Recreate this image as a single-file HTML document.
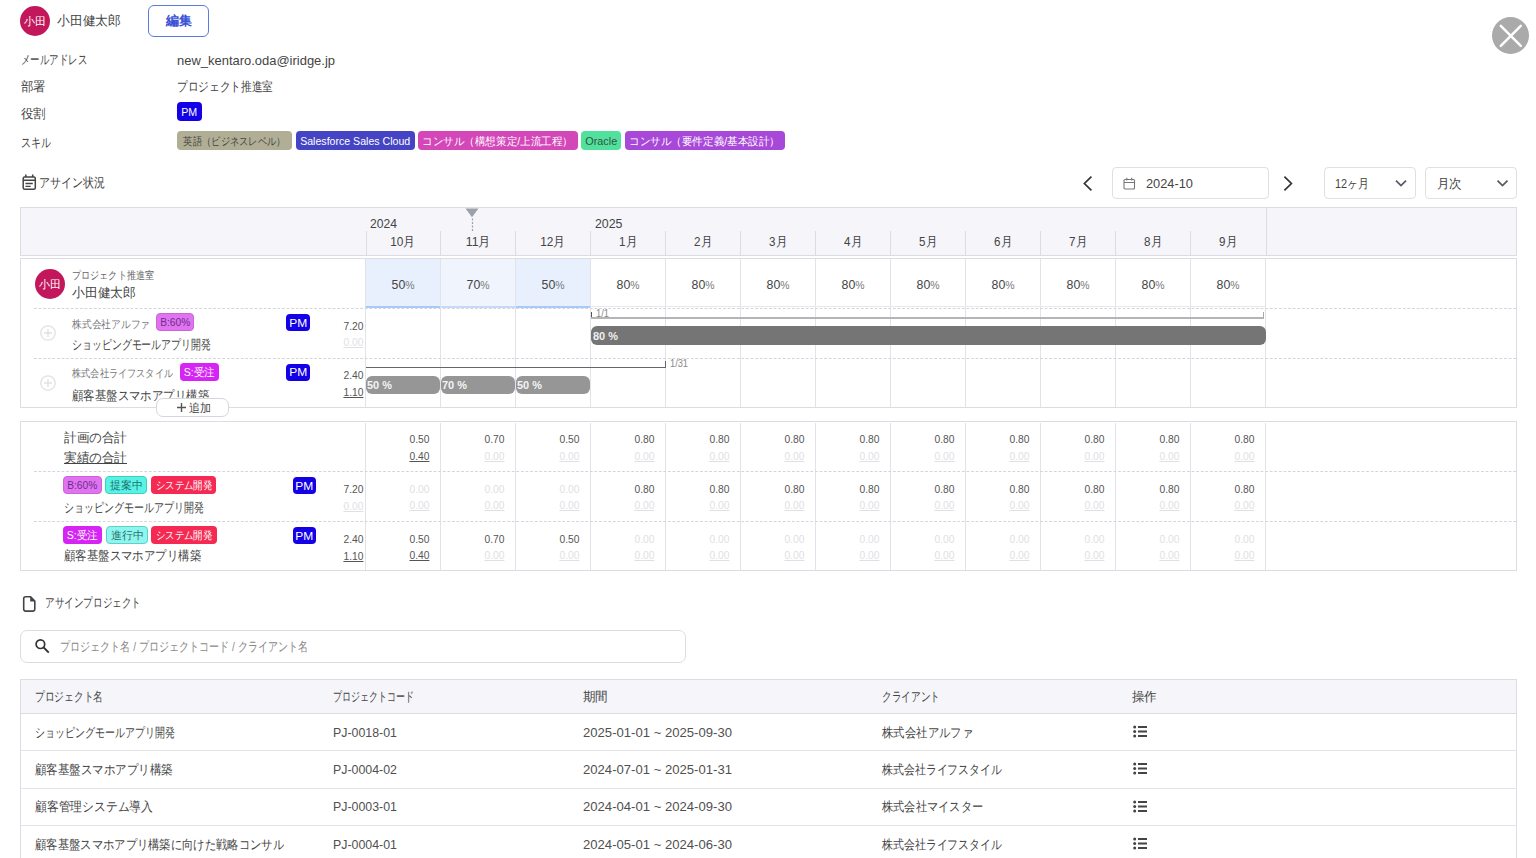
<!DOCTYPE html>
<html lang="ja"><head><meta charset="utf-8"><title>assign</title>
<style>
html,body{margin:0;padding:0;background:#fff;width:1536px;height:858px;overflow:hidden;position:relative;font-family:'Liberation Sans', sans-serif;}
.s{display:inline-block;}
</style></head><body>
<div style="position:absolute;left:20px;top:5.5px;width:30px;height:30.0px;background:#c2185b;border-radius:50%;"></div>
<div style="position:absolute;left:-465px;width:1000px;text-align:center;top:15.50px;font-size:11px;line-height:11px;color:#fff;font-weight:400;white-space:nowrap;"><span id="t1" class="s" style="transform-origin:center center;transform:scaleX(1.0000);">小田</span></div>
<div style="position:absolute;left:57px;top:14.00px;font-size:13px;line-height:13px;color:#444;font-weight:400;white-space:nowrap;"><span id="t2" class="s" style="transform-origin:left center;transform:scaleX(0.9846);">小田健太郎</span></div>
<div style="position:absolute;left:148px;top:4.8px;width:61px;height:31.8px;border:1.2px solid #5a7ce2;border-radius:6px;box-sizing:border-box;"></div>
<div style="position:absolute;left:-321.5px;width:1000px;text-align:center;top:14.00px;font-size:13px;line-height:13px;color:#3a52d6;font-weight:700;white-space:nowrap;"><span id="t3" class="s" style="transform-origin:center center;transform:scaleX(1.0000);">編集</span></div>
<div style="position:absolute;left:1492px;top:16.9px;width:37.299999999999955px;height:37.300000000000004px;background:#aaaaaa;border-radius:50%;"></div>
<svg style="position:absolute;left:1492px;top:16.9px" width="38" height="38" viewBox="0 0 38 38"><path d="M8.8 8.8 L28.8 28.8 M28.8 8.8 L8.8 28.8" stroke="#fff" stroke-width="2.5" stroke-linecap="round"/></svg>
<div style="position:absolute;left:21px;top:52.50px;font-size:13px;line-height:13px;color:#444;font-weight:400;white-space:nowrap;"><span id="t4" class="s" style="transform-origin:left center;transform:scaleX(0.7253);">メールアドレス</span></div>
<div style="position:absolute;left:177px;top:53.50px;font-size:13px;line-height:13px;color:#444;font-weight:400;white-space:nowrap;"><span id="t5" class="s" style="transform-origin:left center;transform:scaleX(0.9970);">new_kentaro.oda@iridge.jp</span></div>
<div style="position:absolute;left:21px;top:79.50px;font-size:13px;line-height:13px;color:#444;font-weight:400;white-space:nowrap;"><span id="t6" class="s" style="transform-origin:left center;transform:scaleX(0.9615);">部署</span></div>
<div style="position:absolute;left:177px;top:79.50px;font-size:13px;line-height:13px;color:#444;font-weight:400;white-space:nowrap;"><span id="t7" class="s" style="transform-origin:left center;transform:scaleX(0.8205);">プロジェクト推進室</span></div>
<div style="position:absolute;left:21px;top:106.50px;font-size:13px;line-height:13px;color:#444;font-weight:400;white-space:nowrap;"><span id="t8" class="s" style="transform-origin:left center;transform:scaleX(0.9615);">役割</span></div>
<div style="position:absolute;left:177px;top:102px;width:25px;height:19px;background:#1400e6;border-radius:4px;"></div>
<div style="position:absolute;left:-310.5px;width:1000px;text-align:center;top:106.60px;font-size:11px;line-height:11px;color:#fff;font-weight:400;white-space:nowrap;"><span id="t9" class="s" style="transform-origin:center center;transform:scaleX(0.9697);">PM</span></div>
<div style="position:absolute;left:21px;top:135.50px;font-size:13px;line-height:13px;color:#444;font-weight:400;white-space:nowrap;"><span id="t10" class="s" style="transform-origin:left center;transform:scaleX(0.7692);">スキル</span></div>
<div style="position:absolute;left:177px;top:131px;width:115px;height:19px;background:#b0ae94;border-radius:4px;"></div>
<div style="position:absolute;left:-265.5px;width:1000px;text-align:center;top:135.60px;font-size:11px;line-height:11px;color:#444;font-weight:400;white-space:nowrap;"><span id="t11" class="s" style="transform-origin:center center;transform:scaleX(0.8430);">英語（ビジネスレベル）</span></div>
<div style="position:absolute;left:296px;top:131px;width:119px;height:19px;background:#4444c4;border-radius:4px;"></div>
<div style="position:absolute;left:-144.5px;width:1000px;text-align:center;top:135.60px;font-size:11px;line-height:11px;color:#fff;font-weight:400;white-space:nowrap;"><span id="t12" class="s" style="transform-origin:center center;transform:scaleX(0.9620);">Salesforce Sales Cloud</span></div>
<div style="position:absolute;left:418px;top:131px;width:160px;height:19px;background:#d447b8;border-radius:4px;"></div>
<div style="position:absolute;left:-2.0px;width:1000px;text-align:center;top:135.60px;font-size:11px;line-height:11px;color:#fff;font-weight:400;white-space:nowrap;"><span id="t13" class="s" style="transform-origin:center center;transform:scaleX(0.9614);">コンサル（構想策定/上流工程）</span></div>
<div style="position:absolute;left:581px;top:131px;width:40px;height:19px;background:#52e19c;border-radius:4px;"></div>
<div style="position:absolute;left:101.0px;width:1000px;text-align:center;top:135.60px;font-size:11px;line-height:11px;color:#335544;font-weight:400;white-space:nowrap;"><span id="t14" class="s" style="transform-origin:center center;transform:scaleX(0.9875);">Oracle</span></div>
<div style="position:absolute;left:625px;top:131px;width:160px;height:19px;background:#a848d8;border-radius:4px;"></div>
<div style="position:absolute;left:205.0px;width:1000px;text-align:center;top:135.60px;font-size:11px;line-height:11px;color:#fff;font-weight:400;white-space:nowrap;"><span id="t15" class="s" style="transform-origin:center center;transform:scaleX(0.9614);">コンサル（要件定義/基本設計）</span></div>
<svg style="position:absolute;left:21px;top:174px" width="16" height="18" viewBox="0 0 16 18"><rect x="2.2" y="3" width="12.1" height="12.3" rx="1.5" fill="none" stroke="#444" stroke-width="1.5"/><path d="M2.2 6.3 H14.3 M4.8 0.6 V3 M11.7 0.6 V3" stroke="#444" stroke-width="1.5"/><path d="M4.5 9.5 H11.8 M4.5 12.4 H9.7" stroke="#444" stroke-width="1.3"/></svg>
<div style="position:absolute;left:39px;top:175.50px;font-size:13px;line-height:13px;color:#444;font-weight:400;white-space:nowrap;"><span id="t16" class="s" style="transform-origin:left center;transform:scaleX(0.8462);">アサイン状況</span></div>
<svg style="position:absolute;left:1080px;top:174px" width="16" height="19" viewBox="0 0 16 19"><path d="M11.4 2.7 L4.4 9.5 L11.4 16.3" fill="none" stroke="#333" stroke-width="1.7"/></svg>
<div style="position:absolute;left:1112px;top:167px;width:157px;height:32px;border:1px solid #e0e0e3;border-radius:4px;box-sizing:border-box;"></div>
<svg style="position:absolute;left:1123px;top:177px" width="13" height="13" viewBox="0 0 13 13"><rect x="1" y="2.5" width="10.5" height="9.5" rx="1" fill="none" stroke="#777" stroke-width="1.1"/><path d="M1 5.5 H11.5 M3.8 0.8 V3.5 M8.7 0.8 V3.5" stroke="#777" stroke-width="1.1"/></svg>
<div style="position:absolute;left:1146px;top:176.50px;font-size:13px;line-height:13px;color:#444;font-weight:400;white-space:nowrap;"><span id="t17" class="s" style="transform-origin:left center;transform:scaleX(0.9849);">2024-10</span></div>
<svg style="position:absolute;left:1280px;top:174px" width="16" height="19" viewBox="0 0 16 19"><path d="M4.4 2.7 L11.4 9.5 L4.4 16.3" fill="none" stroke="#333" stroke-width="1.7"/></svg>
<div style="position:absolute;left:1324px;top:167px;width:92px;height:32px;border:1px solid #e0e0e3;border-radius:4px;box-sizing:border-box;"></div>
<div style="position:absolute;left:1335px;top:176.80px;font-size:13px;line-height:13px;color:#444;font-weight:400;white-space:nowrap;"><span id="t18" class="s" style="transform-origin:left center;transform:scaleX(0.8402);">12ヶ月</span></div>
<svg style="position:absolute;left:1393px;top:178px" width="15" height="10" viewBox="0 0 15 10"><path d="M3 2.6 L8 7.6 L13 2.6" fill="none" stroke="#5a5b66" stroke-width="1.8"/></svg>
<div style="position:absolute;left:1425px;top:167px;width:92px;height:32px;border:1px solid #e0e0e3;border-radius:4px;box-sizing:border-box;"></div>
<div style="position:absolute;left:1437px;top:176.80px;font-size:13px;line-height:13px;color:#444;font-weight:400;white-space:nowrap;"><span id="t19" class="s" style="transform-origin:left center;transform:scaleX(0.9615);">月次</span></div>
<svg style="position:absolute;left:1495px;top:178px" width="15" height="10" viewBox="0 0 15 10"><path d="M2.5 2.6 L7.5 7.6 L12.5 2.6" fill="none" stroke="#5a5b66" stroke-width="1.8"/></svg>
<div style="position:absolute;left:20px;top:207px;width:1497px;height:49px;background:#f5f5fa;border:1px solid #dcdde4;box-sizing:border-box;"></div>
<div style="position:absolute;left:366px;top:231px;width:1px;height:24px;background:#dcdde4;"></div>
<div style="position:absolute;left:440px;top:231px;width:1px;height:24px;background:#dcdde4;"></div>
<div style="position:absolute;left:515px;top:231px;width:1px;height:24px;background:#dcdde4;"></div>
<div style="position:absolute;left:590px;top:231px;width:1px;height:24px;background:#dcdde4;"></div>
<div style="position:absolute;left:665px;top:231px;width:1px;height:24px;background:#dcdde4;"></div>
<div style="position:absolute;left:740px;top:231px;width:1px;height:24px;background:#dcdde4;"></div>
<div style="position:absolute;left:815px;top:231px;width:1px;height:24px;background:#dcdde4;"></div>
<div style="position:absolute;left:890px;top:231px;width:1px;height:24px;background:#dcdde4;"></div>
<div style="position:absolute;left:965px;top:231px;width:1px;height:24px;background:#dcdde4;"></div>
<div style="position:absolute;left:1040px;top:231px;width:1px;height:24px;background:#dcdde4;"></div>
<div style="position:absolute;left:1115px;top:231px;width:1px;height:24px;background:#dcdde4;"></div>
<div style="position:absolute;left:1190px;top:231px;width:1px;height:24px;background:#dcdde4;"></div>
<div style="position:absolute;left:1266px;top:207px;width:1px;height:48px;background:#dcdde4;"></div>
<div style="position:absolute;left:370px;top:216.50px;font-size:13px;line-height:13px;color:#444;font-weight:400;white-space:nowrap;"><span id="t20" class="s" style="transform-origin:left center;transform:scaleX(0.9335);">2024</span></div>
<div style="position:absolute;left:594.5px;top:216.50px;font-size:13px;line-height:13px;color:#444;font-weight:400;white-space:nowrap;"><span id="t21" class="s" style="transform-origin:left center;transform:scaleX(0.9508);">2025</span></div>
<div style="position:absolute;left:-97px;width:1000px;text-align:center;top:234.50px;font-size:13px;line-height:13px;color:#444;font-weight:400;white-space:nowrap;"><span id="t22" class="s" style="transform-origin:center center;transform:scaleX(0.9101);">10月</span></div>
<div style="position:absolute;left:-22px;width:1000px;text-align:center;top:234.50px;font-size:13px;line-height:13px;color:#444;font-weight:400;white-space:nowrap;"><span id="t23" class="s" style="transform-origin:center center;transform:scaleX(0.9434);">11月</span></div>
<div style="position:absolute;left:53px;width:1000px;text-align:center;top:234.50px;font-size:13px;line-height:13px;color:#444;font-weight:400;white-space:nowrap;"><span id="t24" class="s" style="transform-origin:center center;transform:scaleX(0.9101);">12月</span></div>
<div style="position:absolute;left:128px;width:1000px;text-align:center;top:234.50px;font-size:13px;line-height:13px;color:#444;font-weight:400;white-space:nowrap;"><span id="t25" class="s" style="transform-origin:center center;transform:scaleX(0.8896);">1月</span></div>
<div style="position:absolute;left:203px;width:1000px;text-align:center;top:234.50px;font-size:13px;line-height:13px;color:#444;font-weight:400;white-space:nowrap;"><span id="t26" class="s" style="transform-origin:center center;transform:scaleX(0.8896);">2月</span></div>
<div style="position:absolute;left:278px;width:1000px;text-align:center;top:234.50px;font-size:13px;line-height:13px;color:#444;font-weight:400;white-space:nowrap;"><span id="t27" class="s" style="transform-origin:center center;transform:scaleX(0.8896);">3月</span></div>
<div style="position:absolute;left:353px;width:1000px;text-align:center;top:234.50px;font-size:13px;line-height:13px;color:#444;font-weight:400;white-space:nowrap;"><span id="t28" class="s" style="transform-origin:center center;transform:scaleX(0.8896);">4月</span></div>
<div style="position:absolute;left:428px;width:1000px;text-align:center;top:234.50px;font-size:13px;line-height:13px;color:#444;font-weight:400;white-space:nowrap;"><span id="t29" class="s" style="transform-origin:center center;transform:scaleX(0.8896);">5月</span></div>
<div style="position:absolute;left:503px;width:1000px;text-align:center;top:234.50px;font-size:13px;line-height:13px;color:#444;font-weight:400;white-space:nowrap;"><span id="t30" class="s" style="transform-origin:center center;transform:scaleX(0.8896);">6月</span></div>
<div style="position:absolute;left:578px;width:1000px;text-align:center;top:234.50px;font-size:13px;line-height:13px;color:#444;font-weight:400;white-space:nowrap;"><span id="t31" class="s" style="transform-origin:center center;transform:scaleX(0.8896);">7月</span></div>
<div style="position:absolute;left:653px;width:1000px;text-align:center;top:234.50px;font-size:13px;line-height:13px;color:#444;font-weight:400;white-space:nowrap;"><span id="t32" class="s" style="transform-origin:center center;transform:scaleX(0.8896);">8月</span></div>
<div style="position:absolute;left:728px;width:1000px;text-align:center;top:234.50px;font-size:13px;line-height:13px;color:#444;font-weight:400;white-space:nowrap;"><span id="t33" class="s" style="transform-origin:center center;transform:scaleX(0.8896);">9月</span></div>
<svg style="position:absolute;left:465px;top:207.5px" width="15" height="24" viewBox="0 0 15 24"><path d="M0.5 0.5 H13.5 L7 9.2 Z" fill="#9ba1ab"/><path d="M7.5 10.5 V23" stroke="#9ba1ab" stroke-width="1.2" stroke-dasharray="2 1.5"/></svg>
<div style="position:absolute;left:20px;top:258px;width:1497px;height:150px;border:1px solid #dcdde4;box-sizing:border-box;"></div>
<div style="position:absolute;left:366px;top:259px;width:74px;height:49px;background:#e7f0fc;border-bottom:2px solid #a9c9f7;box-sizing:border-box;"></div>
<div style="position:absolute;left:441px;top:259px;width:74px;height:49px;background:#f0f5fd;border-bottom:2px solid #c5daf8;box-sizing:border-box;"></div>
<div style="position:absolute;left:516px;top:259px;width:74px;height:49px;background:#e7f0fc;border-bottom:2px solid #a9c9f7;box-sizing:border-box;"></div>
<div style="position:absolute;left:365px;top:259px;width:1px;height:148px;background:#e2e3e9;"></div>
<div style="position:absolute;left:440px;top:259px;width:1px;height:148px;background:#e2e3e9;"></div>
<div style="position:absolute;left:515px;top:259px;width:1px;height:148px;background:#e2e3e9;"></div>
<div style="position:absolute;left:590px;top:259px;width:1px;height:148px;background:#e2e3e9;"></div>
<div style="position:absolute;left:665px;top:259px;width:1px;height:148px;background:#e2e3e9;"></div>
<div style="position:absolute;left:740px;top:259px;width:1px;height:148px;background:#e2e3e9;"></div>
<div style="position:absolute;left:815px;top:259px;width:1px;height:148px;background:#e2e3e9;"></div>
<div style="position:absolute;left:890px;top:259px;width:1px;height:148px;background:#e2e3e9;"></div>
<div style="position:absolute;left:965px;top:259px;width:1px;height:148px;background:#e2e3e9;"></div>
<div style="position:absolute;left:1040px;top:259px;width:1px;height:148px;background:#e2e3e9;"></div>
<div style="position:absolute;left:1115px;top:259px;width:1px;height:148px;background:#e2e3e9;"></div>
<div style="position:absolute;left:1190px;top:259px;width:1px;height:148px;background:#e2e3e9;"></div>
<div style="position:absolute;left:1265px;top:259px;width:1px;height:148px;background:#e2e3e9;"></div>
<div style="position:absolute;left:34px;top:308px;width:1482px;height:1px;background-image:linear-gradient(to right,#d3d5dc 0 3px,transparent 3px 4.6px);background-size:4.6px 1px;"></div>
<div style="position:absolute;left:34px;top:358px;width:1482px;height:1px;background-image:linear-gradient(to right,#d3d5dc 0 3px,transparent 3px 4.6px);background-size:4.6px 1px;"></div>
<div style="position:absolute;left:35px;top:268.5px;width:30px;height:30.0px;background:#c2185b;border-radius:50%;"></div>
<div style="position:absolute;left:-450px;width:1000px;text-align:center;top:278.50px;font-size:11px;line-height:11px;color:#fff;font-weight:400;white-space:nowrap;"><span id="t34" class="s" style="transform-origin:center center;transform:scaleX(1.0000);">小田</span></div>
<div style="position:absolute;left:71.5px;top:269.75px;font-size:10.5px;line-height:10.5px;color:#666;font-weight:400;white-space:nowrap;"><span id="t35" class="s" style="transform-origin:left center;transform:scaleX(0.8283);">プロジェクト推進室</span></div>
<div style="position:absolute;left:71.5px;top:286.00px;font-size:13px;line-height:13px;color:#444;font-weight:400;white-space:nowrap;"><span id="t36" class="s" style="transform-origin:left center;transform:scaleX(0.9846);">小田健太郎</span></div>
<div style="position:absolute;left:-96.5px;width:1000px;text-align:center;top:277.50px;font-size:13px;line-height:13px;color:#444;font-weight:400;white-space:nowrap;"><span id="t37" class="s" style="transform-origin:center center;transform:scaleX(0.9485);">50<span style="font-size:11px;color:#777">%</span></span></div>
<div style="position:absolute;left:-21.5px;width:1000px;text-align:center;top:277.50px;font-size:13px;line-height:13px;color:#444;font-weight:400;white-space:nowrap;"><span id="t38" class="s" style="transform-origin:center center;transform:scaleX(0.9485);">70<span style="font-size:11px;color:#777">%</span></span></div>
<div style="position:absolute;left:53.5px;width:1000px;text-align:center;top:277.50px;font-size:13px;line-height:13px;color:#444;font-weight:400;white-space:nowrap;"><span id="t39" class="s" style="transform-origin:center center;transform:scaleX(0.9485);">50<span style="font-size:11px;color:#777">%</span></span></div>
<div style="position:absolute;left:128.5px;width:1000px;text-align:center;top:277.50px;font-size:13px;line-height:13px;color:#444;font-weight:400;white-space:nowrap;"><span id="t40" class="s" style="transform-origin:center center;transform:scaleX(0.9485);">80<span style="font-size:11px;color:#777">%</span></span></div>
<div style="position:absolute;left:203.5px;width:1000px;text-align:center;top:277.50px;font-size:13px;line-height:13px;color:#444;font-weight:400;white-space:nowrap;"><span id="t41" class="s" style="transform-origin:center center;transform:scaleX(0.9485);">80<span style="font-size:11px;color:#777">%</span></span></div>
<div style="position:absolute;left:278.5px;width:1000px;text-align:center;top:277.50px;font-size:13px;line-height:13px;color:#444;font-weight:400;white-space:nowrap;"><span id="t42" class="s" style="transform-origin:center center;transform:scaleX(0.9485);">80<span style="font-size:11px;color:#777">%</span></span></div>
<div style="position:absolute;left:353.5px;width:1000px;text-align:center;top:277.50px;font-size:13px;line-height:13px;color:#444;font-weight:400;white-space:nowrap;"><span id="t43" class="s" style="transform-origin:center center;transform:scaleX(0.9485);">80<span style="font-size:11px;color:#777">%</span></span></div>
<div style="position:absolute;left:428.5px;width:1000px;text-align:center;top:277.50px;font-size:13px;line-height:13px;color:#444;font-weight:400;white-space:nowrap;"><span id="t44" class="s" style="transform-origin:center center;transform:scaleX(0.9485);">80<span style="font-size:11px;color:#777">%</span></span></div>
<div style="position:absolute;left:503.5px;width:1000px;text-align:center;top:277.50px;font-size:13px;line-height:13px;color:#444;font-weight:400;white-space:nowrap;"><span id="t45" class="s" style="transform-origin:center center;transform:scaleX(0.9485);">80<span style="font-size:11px;color:#777">%</span></span></div>
<div style="position:absolute;left:578.5px;width:1000px;text-align:center;top:277.50px;font-size:13px;line-height:13px;color:#444;font-weight:400;white-space:nowrap;"><span id="t46" class="s" style="transform-origin:center center;transform:scaleX(0.9485);">80<span style="font-size:11px;color:#777">%</span></span></div>
<div style="position:absolute;left:653.5px;width:1000px;text-align:center;top:277.50px;font-size:13px;line-height:13px;color:#444;font-weight:400;white-space:nowrap;"><span id="t47" class="s" style="transform-origin:center center;transform:scaleX(0.9485);">80<span style="font-size:11px;color:#777">%</span></span></div>
<div style="position:absolute;left:728.5px;width:1000px;text-align:center;top:277.50px;font-size:13px;line-height:13px;color:#444;font-weight:400;white-space:nowrap;"><span id="t48" class="s" style="transform-origin:center center;transform:scaleX(0.9485);">80<span style="font-size:11px;color:#777">%</span></span></div>
<svg style="position:absolute;left:40px;top:325.4px" width="16" height="16" viewBox="0 0 16 16"><circle cx="8" cy="8" r="7.2" fill="none" stroke="#dfe0e6" stroke-width="1.3"/><path d="M8 4 V12 M4 8 H12" stroke="#dfe0e6" stroke-width="1.3"/></svg>
<svg style="position:absolute;left:40px;top:375px" width="16" height="16" viewBox="0 0 16 16"><circle cx="8" cy="8" r="7.2" fill="none" stroke="#dfe0e6" stroke-width="1.3"/><path d="M8 4 V12 M4 8 H12" stroke="#dfe0e6" stroke-width="1.3"/></svg>
<div style="position:absolute;left:71.7px;top:318.80px;font-size:11px;line-height:11px;color:#777;font-weight:400;white-space:nowrap;"><span id="t49" class="s" style="transform-origin:left center;transform:scaleX(0.8864);">株式会社アルファ</span></div>
<div style="position:absolute;left:156px;top:313px;width:38px;height:18px;background:#e173f0;border-radius:4px;border:1px solid #c964d9;box-sizing:border-box;"></div>
<div style="position:absolute;left:-325.0px;width:1000px;text-align:center;top:317.10px;font-size:11px;line-height:11px;color:#6b2d8c;font-weight:400;white-space:nowrap;"><span id="t50" class="s" style="transform-origin:center center;transform:scaleX(0.9253);">B:60%</span></div>
<div style="position:absolute;left:286px;top:314px;width:24px;height:17px;background:#1400e6;border-radius:4px;"></div>
<div style="position:absolute;left:-202.0px;width:1000px;text-align:center;top:317.60px;font-size:11px;line-height:11px;color:#fff;font-weight:400;white-space:nowrap;"><span id="t51" class="s" style="transform-origin:center center;transform:scaleX(1.0909);">PM</span></div>
<div style="position:absolute;left:72px;top:337.80px;font-size:13px;line-height:13px;color:#444;font-weight:400;white-space:nowrap;"><span id="t52" class="s" style="transform-origin:left center;transform:scaleX(0.7637);">ショッピングモールアプリ開発</span></div>
<div style="position:absolute;right:1172.5px;top:320.50px;font-size:11px;line-height:11px;color:#555;font-weight:400;white-space:nowrap;"><span id="t53" class="s" style="transform-origin:right center;transform:scaleX(0.9336);">7.20</span></div>
<div style="position:absolute;right:1172.5px;top:337.20px;font-size:11px;line-height:11px;color:#dfe0e4;font-weight:400;white-space:nowrap;"><span id="t54" class="s" style="transform-origin:right center;transform:scaleX(0.9336);text-decoration:underline;">0.00</span></div>
<div style="position:absolute;left:591px;top:306px;width:674px;height:1px;background:#e6e8ed;"></div>
<div style="position:absolute;left:591px;top:312px;width:1px;height:6.5px;background:#555;"></div>
<div style="position:absolute;left:591px;top:317px;width:673px;height:1.8000000000000114px;background:#b5b5b5;"></div>
<div style="position:absolute;left:1262.5px;top:312px;width:1.5px;height:6.800000000000011px;background:#aaa;border-bottom-right-radius:1px;"></div>
<div style="position:absolute;left:595.7px;top:309.00px;font-size:10px;line-height:10px;color:#888;font-weight:400;white-space:nowrap;"><span id="t55" class="s" style="transform-origin:left center;transform:scaleX(0.9348);">1/1</span></div>
<div style="position:absolute;left:591px;top:326.2px;width:674.5px;height:18.400000000000034px;background:#757575;border-radius:6px;"></div>
<div style="position:absolute;left:593px;top:330.70px;font-size:11px;line-height:11px;color:#f0f0f0;font-weight:700;white-space:nowrap;"><span id="t56" class="s" style="transform-origin:left center;transform:scaleX(0.9969);">80 %</span></div>
<div style="position:absolute;left:71.7px;top:367.90px;font-size:11px;line-height:11px;color:#777;font-weight:400;white-space:nowrap;"><span id="t57" class="s" style="transform-origin:left center;transform:scaleX(0.8347);">株式会社ライフスタイル</span></div>
<div style="position:absolute;left:180px;top:363px;width:39px;height:18px;background:#d524f3;border-radius:4px;"></div>
<div style="position:absolute;left:-300.5px;width:1000px;text-align:center;top:367.10px;font-size:11px;line-height:11px;color:#fff;font-weight:400;white-space:nowrap;"><span id="t58" class="s" style="transform-origin:center center;transform:scaleX(0.9566);">S:受注</span></div>
<div style="position:absolute;left:286px;top:364px;width:24px;height:16.5px;background:#1400e6;border-radius:4px;"></div>
<div style="position:absolute;left:-202.0px;width:1000px;text-align:center;top:367.35px;font-size:11px;line-height:11px;color:#fff;font-weight:400;white-space:nowrap;"><span id="t59" class="s" style="transform-origin:center center;transform:scaleX(1.0909);">PM</span></div>
<div style="position:absolute;left:72px;top:388.50px;font-size:13px;line-height:13px;color:#444;font-weight:400;white-space:nowrap;"><span id="t60" class="s" style="transform-origin:left center;transform:scaleX(0.8782);">顧客基盤スマホアプリ構築</span></div>
<div style="position:absolute;right:1172.5px;top:370.20px;font-size:11px;line-height:11px;color:#555;font-weight:400;white-space:nowrap;"><span id="t61" class="s" style="transform-origin:right center;transform:scaleX(0.9336);">2.40</span></div>
<div style="position:absolute;right:1172.5px;top:386.90px;font-size:11px;line-height:11px;color:#555;font-weight:400;white-space:nowrap;"><span id="t62" class="s" style="transform-origin:right center;transform:scaleX(0.9336);text-decoration:underline;">1.10</span></div>
<div style="position:absolute;left:366px;top:366.9px;width:300px;height:1.0px;background:#666;"></div>
<div style="position:absolute;left:665px;top:361px;width:1px;height:6.899999999999977px;background:#666;"></div>
<div style="position:absolute;left:669.7px;top:359.00px;font-size:10px;line-height:10px;color:#888;font-weight:400;white-space:nowrap;"><span id="t63" class="s" style="transform-origin:left center;transform:scaleX(0.9246);">1/31</span></div>
<div style="position:absolute;left:365.5px;top:376.3px;width:74.5px;height:17.69999999999999px;background:#969696;border-radius:6px;"></div>
<div style="position:absolute;left:367px;top:380.00px;font-size:11px;line-height:11px;color:#f4f4f4;font-weight:700;white-space:nowrap;"><span id="t64" class="s" style="transform-origin:left center;transform:scaleX(0.9969);">50 %</span></div>
<div style="position:absolute;left:440.5px;top:376.3px;width:74.5px;height:17.69999999999999px;background:#969696;border-radius:6px;"></div>
<div style="position:absolute;left:442px;top:380.00px;font-size:11px;line-height:11px;color:#f4f4f4;font-weight:700;white-space:nowrap;"><span id="t65" class="s" style="transform-origin:left center;transform:scaleX(0.9969);">70 %</span></div>
<div style="position:absolute;left:515.5px;top:376.3px;width:74.5px;height:17.69999999999999px;background:#969696;border-radius:6px;"></div>
<div style="position:absolute;left:517px;top:380.00px;font-size:11px;line-height:11px;color:#f4f4f4;font-weight:700;white-space:nowrap;"><span id="t66" class="s" style="transform-origin:left center;transform:scaleX(0.9969);">50 %</span></div>
<div style="position:absolute;left:156px;top:398px;width:72.5px;height:18.5px;background:#fff;border:1px solid #d6d7dd;border-radius:7px;box-sizing:border-box;"></div>
<svg style="position:absolute;left:177px;top:403px" width="9" height="9" viewBox="0 0 9 9"><path d="M4.5 0 V9 M0 4.5 H9" stroke="#555" stroke-width="1.4"/></svg>
<div style="position:absolute;left:189.3px;top:401.80px;font-size:12px;line-height:12px;color:#444;font-weight:400;white-space:nowrap;"><span id="t67" class="s" style="transform-origin:left center;transform:scaleX(0.9167);">追加</span></div>
<div style="position:absolute;left:20px;top:421px;width:1497px;height:149.5px;border:1px solid #dcdde4;box-sizing:border-box;"></div>
<div style="position:absolute;left:365px;top:422.5px;width:1px;height:147.0px;background:#e2e3e9;"></div>
<div style="position:absolute;left:440px;top:422.5px;width:1px;height:147.0px;background:#e2e3e9;"></div>
<div style="position:absolute;left:515px;top:422.5px;width:1px;height:147.0px;background:#e2e3e9;"></div>
<div style="position:absolute;left:590px;top:422.5px;width:1px;height:147.0px;background:#e2e3e9;"></div>
<div style="position:absolute;left:665px;top:422.5px;width:1px;height:147.0px;background:#e2e3e9;"></div>
<div style="position:absolute;left:740px;top:422.5px;width:1px;height:147.0px;background:#e2e3e9;"></div>
<div style="position:absolute;left:815px;top:422.5px;width:1px;height:147.0px;background:#e2e3e9;"></div>
<div style="position:absolute;left:890px;top:422.5px;width:1px;height:147.0px;background:#e2e3e9;"></div>
<div style="position:absolute;left:965px;top:422.5px;width:1px;height:147.0px;background:#e2e3e9;"></div>
<div style="position:absolute;left:1040px;top:422.5px;width:1px;height:147.0px;background:#e2e3e9;"></div>
<div style="position:absolute;left:1115px;top:422.5px;width:1px;height:147.0px;background:#e2e3e9;"></div>
<div style="position:absolute;left:1190px;top:422.5px;width:1px;height:147.0px;background:#e2e3e9;"></div>
<div style="position:absolute;left:1265px;top:422.5px;width:1px;height:147.0px;background:#e2e3e9;"></div>
<div style="position:absolute;left:34px;top:471px;width:1482px;height:1px;background-image:linear-gradient(to right,#d3d5dc 0 3px,transparent 3px 4.6px);background-size:4.6px 1px;"></div>
<div style="position:absolute;left:34px;top:521px;width:1482px;height:1px;background-image:linear-gradient(to right,#d3d5dc 0 3px,transparent 3px 4.6px);background-size:4.6px 1px;"></div>
<div style="position:absolute;left:63.8px;top:430.50px;font-size:13px;line-height:13px;color:#444;font-weight:400;white-space:nowrap;"><span id="t68" class="s" style="transform-origin:left center;transform:scaleX(0.9692);">計画の合計</span></div>
<div style="position:absolute;left:63.8px;top:450.50px;font-size:13px;line-height:13px;color:#444;font-weight:400;white-space:nowrap;"><span id="t69" class="s" style="transform-origin:left center;transform:scaleX(0.9692);text-decoration:underline;">実績の合計</span></div>
<div style="position:absolute;left:63px;top:476px;width:39px;height:18.30000000000001px;background:#e173f0;border-radius:4px;border:1px solid #c964d9;box-sizing:border-box;"></div>
<div style="position:absolute;left:-417.5px;width:1000px;text-align:center;top:480.25px;font-size:11px;line-height:11px;color:#6b2d8c;font-weight:400;white-space:nowrap;"><span id="t70" class="s" style="transform-origin:center center;transform:scaleX(0.9253);">B:60%</span></div>
<div style="position:absolute;left:105.3px;top:476px;width:41.7px;height:18.30000000000001px;background:#57f4e6;border-radius:4px;border:1px solid #40cfc0;box-sizing:border-box;"></div>
<div style="position:absolute;left:-373.85px;width:1000px;text-align:center;top:480.25px;font-size:11px;line-height:11px;color:#22706a;font-weight:400;white-space:nowrap;"><span id="t71" class="s" style="transform-origin:center center;transform:scaleX(1.0000);">提案中</span></div>
<div style="position:absolute;left:151.2px;top:476px;width:65.30000000000001px;height:18.30000000000001px;background:#f42a53;border-radius:4px;"></div>
<div style="position:absolute;left:-316.15px;width:1000px;text-align:center;top:480.25px;font-size:11px;line-height:11px;color:#fff;font-weight:400;white-space:nowrap;"><span id="t72" class="s" style="transform-origin:center center;transform:scaleX(0.8636);">システム開発</span></div>
<div style="position:absolute;left:293px;top:477px;width:23px;height:17px;background:#1400e6;border-radius:4px;"></div>
<div style="position:absolute;left:-195.5px;width:1000px;text-align:center;top:480.60px;font-size:11px;line-height:11px;color:#fff;font-weight:400;white-space:nowrap;"><span id="t73" class="s" style="transform-origin:center center;transform:scaleX(1.0909);">PM</span></div>
<div style="position:absolute;left:63.8px;top:500.70px;font-size:13px;line-height:13px;color:#444;font-weight:400;white-space:nowrap;"><span id="t74" class="s" style="transform-origin:left center;transform:scaleX(0.7692);">ショッピングモールアプリ開発</span></div>
<div style="position:absolute;right:1172.5px;top:483.50px;font-size:11px;line-height:11px;color:#555;font-weight:400;white-space:nowrap;"><span id="t75" class="s" style="transform-origin:right center;transform:scaleX(0.9336);">7.20</span></div>
<div style="position:absolute;right:1172.5px;top:500.50px;font-size:11px;line-height:11px;color:#dfe0e4;font-weight:400;white-space:nowrap;"><span id="t76" class="s" style="transform-origin:right center;transform:scaleX(0.9336);text-decoration:underline;">0.00</span></div>
<div style="position:absolute;left:63px;top:526px;width:39px;height:18px;background:#d524f3;border-radius:4px;"></div>
<div style="position:absolute;left:-417.5px;width:1000px;text-align:center;top:530.10px;font-size:11px;line-height:11px;color:#fff;font-weight:400;white-space:nowrap;"><span id="t77" class="s" style="transform-origin:center center;transform:scaleX(0.9566);">S:受注</span></div>
<div style="position:absolute;left:106px;top:526px;width:42px;height:18px;background:#8ef6ee;border-radius:4px;border:1px solid #5fd0c8;box-sizing:border-box;"></div>
<div style="position:absolute;left:-373.0px;width:1000px;text-align:center;top:530.10px;font-size:11px;line-height:11px;color:#2a6f6a;font-weight:400;white-space:nowrap;"><span id="t78" class="s" style="transform-origin:center center;transform:scaleX(1.0000);">進行中</span></div>
<div style="position:absolute;left:151.2px;top:526px;width:65.80000000000001px;height:18px;background:#f42a53;border-radius:4px;"></div>
<div style="position:absolute;left:-315.9px;width:1000px;text-align:center;top:530.10px;font-size:11px;line-height:11px;color:#fff;font-weight:400;white-space:nowrap;"><span id="t79" class="s" style="transform-origin:center center;transform:scaleX(0.8636);">システム開発</span></div>
<div style="position:absolute;left:293px;top:527px;width:23px;height:17px;background:#1400e6;border-radius:4px;"></div>
<div style="position:absolute;left:-195.5px;width:1000px;text-align:center;top:530.60px;font-size:11px;line-height:11px;color:#fff;font-weight:400;white-space:nowrap;"><span id="t80" class="s" style="transform-origin:center center;transform:scaleX(1.0909);">PM</span></div>
<div style="position:absolute;left:63.8px;top:549.30px;font-size:13px;line-height:13px;color:#444;font-weight:400;white-space:nowrap;"><span id="t81" class="s" style="transform-origin:left center;transform:scaleX(0.8782);">顧客基盤スマホアプリ構築</span></div>
<div style="position:absolute;right:1172.5px;top:533.50px;font-size:11px;line-height:11px;color:#555;font-weight:400;white-space:nowrap;"><span id="t82" class="s" style="transform-origin:right center;transform:scaleX(0.9336);">2.40</span></div>
<div style="position:absolute;right:1172.5px;top:550.50px;font-size:11px;line-height:11px;color:#555;font-weight:400;white-space:nowrap;"><span id="t83" class="s" style="transform-origin:right center;transform:scaleX(0.9336);text-decoration:underline;">1.10</span></div>
<div style="position:absolute;right:1106.5px;top:434.00px;font-size:11px;line-height:11px;color:#555;font-weight:400;white-space:nowrap;"><span id="t84" class="s" style="transform-origin:right center;transform:scaleX(0.9336);">0.50</span></div>
<div style="position:absolute;right:1106.5px;top:450.70px;font-size:11px;line-height:11px;color:#555;font-weight:400;white-space:nowrap;"><span id="t85" class="s" style="transform-origin:right center;transform:scaleX(0.9336);text-decoration:underline;">0.40</span></div>
<div style="position:absolute;right:1106.5px;top:483.50px;font-size:11px;line-height:11px;color:#dfe0e4;font-weight:400;white-space:nowrap;"><span id="t86" class="s" style="transform-origin:right center;transform:scaleX(0.9336);">0.00</span></div>
<div style="position:absolute;right:1106.5px;top:499.70px;font-size:11px;line-height:11px;color:#dfe0e4;font-weight:400;white-space:nowrap;"><span id="t87" class="s" style="transform-origin:right center;transform:scaleX(0.9336);text-decoration:underline;">0.00</span></div>
<div style="position:absolute;right:1106.5px;top:533.50px;font-size:11px;line-height:11px;color:#555;font-weight:400;white-space:nowrap;"><span id="t88" class="s" style="transform-origin:right center;transform:scaleX(0.9336);">0.50</span></div>
<div style="position:absolute;right:1106.5px;top:549.70px;font-size:11px;line-height:11px;color:#555;font-weight:400;white-space:nowrap;"><span id="t89" class="s" style="transform-origin:right center;transform:scaleX(0.9336);text-decoration:underline;">0.40</span></div>
<div style="position:absolute;right:1031.5px;top:434.00px;font-size:11px;line-height:11px;color:#555;font-weight:400;white-space:nowrap;"><span id="t90" class="s" style="transform-origin:right center;transform:scaleX(0.9336);">0.70</span></div>
<div style="position:absolute;right:1031.5px;top:450.70px;font-size:11px;line-height:11px;color:#dfe0e4;font-weight:400;white-space:nowrap;"><span id="t91" class="s" style="transform-origin:right center;transform:scaleX(0.9336);text-decoration:underline;">0.00</span></div>
<div style="position:absolute;right:1031.5px;top:483.50px;font-size:11px;line-height:11px;color:#dfe0e4;font-weight:400;white-space:nowrap;"><span id="t92" class="s" style="transform-origin:right center;transform:scaleX(0.9336);">0.00</span></div>
<div style="position:absolute;right:1031.5px;top:499.70px;font-size:11px;line-height:11px;color:#dfe0e4;font-weight:400;white-space:nowrap;"><span id="t93" class="s" style="transform-origin:right center;transform:scaleX(0.9336);text-decoration:underline;">0.00</span></div>
<div style="position:absolute;right:1031.5px;top:533.50px;font-size:11px;line-height:11px;color:#555;font-weight:400;white-space:nowrap;"><span id="t94" class="s" style="transform-origin:right center;transform:scaleX(0.9336);">0.70</span></div>
<div style="position:absolute;right:1031.5px;top:549.70px;font-size:11px;line-height:11px;color:#dfe0e4;font-weight:400;white-space:nowrap;"><span id="t95" class="s" style="transform-origin:right center;transform:scaleX(0.9336);text-decoration:underline;">0.00</span></div>
<div style="position:absolute;right:956.5px;top:434.00px;font-size:11px;line-height:11px;color:#555;font-weight:400;white-space:nowrap;"><span id="t96" class="s" style="transform-origin:right center;transform:scaleX(0.9336);">0.50</span></div>
<div style="position:absolute;right:956.5px;top:450.70px;font-size:11px;line-height:11px;color:#dfe0e4;font-weight:400;white-space:nowrap;"><span id="t97" class="s" style="transform-origin:right center;transform:scaleX(0.9336);text-decoration:underline;">0.00</span></div>
<div style="position:absolute;right:956.5px;top:483.50px;font-size:11px;line-height:11px;color:#dfe0e4;font-weight:400;white-space:nowrap;"><span id="t98" class="s" style="transform-origin:right center;transform:scaleX(0.9336);">0.00</span></div>
<div style="position:absolute;right:956.5px;top:499.70px;font-size:11px;line-height:11px;color:#dfe0e4;font-weight:400;white-space:nowrap;"><span id="t99" class="s" style="transform-origin:right center;transform:scaleX(0.9336);text-decoration:underline;">0.00</span></div>
<div style="position:absolute;right:956.5px;top:533.50px;font-size:11px;line-height:11px;color:#555;font-weight:400;white-space:nowrap;"><span id="t100" class="s" style="transform-origin:right center;transform:scaleX(0.9336);">0.50</span></div>
<div style="position:absolute;right:956.5px;top:549.70px;font-size:11px;line-height:11px;color:#dfe0e4;font-weight:400;white-space:nowrap;"><span id="t101" class="s" style="transform-origin:right center;transform:scaleX(0.9336);text-decoration:underline;">0.00</span></div>
<div style="position:absolute;right:881.5px;top:434.00px;font-size:11px;line-height:11px;color:#555;font-weight:400;white-space:nowrap;"><span id="t102" class="s" style="transform-origin:right center;transform:scaleX(0.9336);">0.80</span></div>
<div style="position:absolute;right:881.5px;top:450.70px;font-size:11px;line-height:11px;color:#dfe0e4;font-weight:400;white-space:nowrap;"><span id="t103" class="s" style="transform-origin:right center;transform:scaleX(0.9336);text-decoration:underline;">0.00</span></div>
<div style="position:absolute;right:881.5px;top:483.50px;font-size:11px;line-height:11px;color:#555;font-weight:400;white-space:nowrap;"><span id="t104" class="s" style="transform-origin:right center;transform:scaleX(0.9336);">0.80</span></div>
<div style="position:absolute;right:881.5px;top:499.70px;font-size:11px;line-height:11px;color:#dfe0e4;font-weight:400;white-space:nowrap;"><span id="t105" class="s" style="transform-origin:right center;transform:scaleX(0.9336);text-decoration:underline;">0.00</span></div>
<div style="position:absolute;right:881.5px;top:533.50px;font-size:11px;line-height:11px;color:#dfe0e4;font-weight:400;white-space:nowrap;"><span id="t106" class="s" style="transform-origin:right center;transform:scaleX(0.9336);">0.00</span></div>
<div style="position:absolute;right:881.5px;top:549.70px;font-size:11px;line-height:11px;color:#dfe0e4;font-weight:400;white-space:nowrap;"><span id="t107" class="s" style="transform-origin:right center;transform:scaleX(0.9336);text-decoration:underline;">0.00</span></div>
<div style="position:absolute;right:806.5px;top:434.00px;font-size:11px;line-height:11px;color:#555;font-weight:400;white-space:nowrap;"><span id="t108" class="s" style="transform-origin:right center;transform:scaleX(0.9336);">0.80</span></div>
<div style="position:absolute;right:806.5px;top:450.70px;font-size:11px;line-height:11px;color:#dfe0e4;font-weight:400;white-space:nowrap;"><span id="t109" class="s" style="transform-origin:right center;transform:scaleX(0.9336);text-decoration:underline;">0.00</span></div>
<div style="position:absolute;right:806.5px;top:483.50px;font-size:11px;line-height:11px;color:#555;font-weight:400;white-space:nowrap;"><span id="t110" class="s" style="transform-origin:right center;transform:scaleX(0.9336);">0.80</span></div>
<div style="position:absolute;right:806.5px;top:499.70px;font-size:11px;line-height:11px;color:#dfe0e4;font-weight:400;white-space:nowrap;"><span id="t111" class="s" style="transform-origin:right center;transform:scaleX(0.9336);text-decoration:underline;">0.00</span></div>
<div style="position:absolute;right:806.5px;top:533.50px;font-size:11px;line-height:11px;color:#dfe0e4;font-weight:400;white-space:nowrap;"><span id="t112" class="s" style="transform-origin:right center;transform:scaleX(0.9336);">0.00</span></div>
<div style="position:absolute;right:806.5px;top:549.70px;font-size:11px;line-height:11px;color:#dfe0e4;font-weight:400;white-space:nowrap;"><span id="t113" class="s" style="transform-origin:right center;transform:scaleX(0.9336);text-decoration:underline;">0.00</span></div>
<div style="position:absolute;right:731.5px;top:434.00px;font-size:11px;line-height:11px;color:#555;font-weight:400;white-space:nowrap;"><span id="t114" class="s" style="transform-origin:right center;transform:scaleX(0.9336);">0.80</span></div>
<div style="position:absolute;right:731.5px;top:450.70px;font-size:11px;line-height:11px;color:#dfe0e4;font-weight:400;white-space:nowrap;"><span id="t115" class="s" style="transform-origin:right center;transform:scaleX(0.9336);text-decoration:underline;">0.00</span></div>
<div style="position:absolute;right:731.5px;top:483.50px;font-size:11px;line-height:11px;color:#555;font-weight:400;white-space:nowrap;"><span id="t116" class="s" style="transform-origin:right center;transform:scaleX(0.9336);">0.80</span></div>
<div style="position:absolute;right:731.5px;top:499.70px;font-size:11px;line-height:11px;color:#dfe0e4;font-weight:400;white-space:nowrap;"><span id="t117" class="s" style="transform-origin:right center;transform:scaleX(0.9336);text-decoration:underline;">0.00</span></div>
<div style="position:absolute;right:731.5px;top:533.50px;font-size:11px;line-height:11px;color:#dfe0e4;font-weight:400;white-space:nowrap;"><span id="t118" class="s" style="transform-origin:right center;transform:scaleX(0.9336);">0.00</span></div>
<div style="position:absolute;right:731.5px;top:549.70px;font-size:11px;line-height:11px;color:#dfe0e4;font-weight:400;white-space:nowrap;"><span id="t119" class="s" style="transform-origin:right center;transform:scaleX(0.9336);text-decoration:underline;">0.00</span></div>
<div style="position:absolute;right:656.5px;top:434.00px;font-size:11px;line-height:11px;color:#555;font-weight:400;white-space:nowrap;"><span id="t120" class="s" style="transform-origin:right center;transform:scaleX(0.9336);">0.80</span></div>
<div style="position:absolute;right:656.5px;top:450.70px;font-size:11px;line-height:11px;color:#dfe0e4;font-weight:400;white-space:nowrap;"><span id="t121" class="s" style="transform-origin:right center;transform:scaleX(0.9336);text-decoration:underline;">0.00</span></div>
<div style="position:absolute;right:656.5px;top:483.50px;font-size:11px;line-height:11px;color:#555;font-weight:400;white-space:nowrap;"><span id="t122" class="s" style="transform-origin:right center;transform:scaleX(0.9336);">0.80</span></div>
<div style="position:absolute;right:656.5px;top:499.70px;font-size:11px;line-height:11px;color:#dfe0e4;font-weight:400;white-space:nowrap;"><span id="t123" class="s" style="transform-origin:right center;transform:scaleX(0.9336);text-decoration:underline;">0.00</span></div>
<div style="position:absolute;right:656.5px;top:533.50px;font-size:11px;line-height:11px;color:#dfe0e4;font-weight:400;white-space:nowrap;"><span id="t124" class="s" style="transform-origin:right center;transform:scaleX(0.9336);">0.00</span></div>
<div style="position:absolute;right:656.5px;top:549.70px;font-size:11px;line-height:11px;color:#dfe0e4;font-weight:400;white-space:nowrap;"><span id="t125" class="s" style="transform-origin:right center;transform:scaleX(0.9336);text-decoration:underline;">0.00</span></div>
<div style="position:absolute;right:581.5px;top:434.00px;font-size:11px;line-height:11px;color:#555;font-weight:400;white-space:nowrap;"><span id="t126" class="s" style="transform-origin:right center;transform:scaleX(0.9336);">0.80</span></div>
<div style="position:absolute;right:581.5px;top:450.70px;font-size:11px;line-height:11px;color:#dfe0e4;font-weight:400;white-space:nowrap;"><span id="t127" class="s" style="transform-origin:right center;transform:scaleX(0.9336);text-decoration:underline;">0.00</span></div>
<div style="position:absolute;right:581.5px;top:483.50px;font-size:11px;line-height:11px;color:#555;font-weight:400;white-space:nowrap;"><span id="t128" class="s" style="transform-origin:right center;transform:scaleX(0.9336);">0.80</span></div>
<div style="position:absolute;right:581.5px;top:499.70px;font-size:11px;line-height:11px;color:#dfe0e4;font-weight:400;white-space:nowrap;"><span id="t129" class="s" style="transform-origin:right center;transform:scaleX(0.9336);text-decoration:underline;">0.00</span></div>
<div style="position:absolute;right:581.5px;top:533.50px;font-size:11px;line-height:11px;color:#dfe0e4;font-weight:400;white-space:nowrap;"><span id="t130" class="s" style="transform-origin:right center;transform:scaleX(0.9336);">0.00</span></div>
<div style="position:absolute;right:581.5px;top:549.70px;font-size:11px;line-height:11px;color:#dfe0e4;font-weight:400;white-space:nowrap;"><span id="t131" class="s" style="transform-origin:right center;transform:scaleX(0.9336);text-decoration:underline;">0.00</span></div>
<div style="position:absolute;right:506.5px;top:434.00px;font-size:11px;line-height:11px;color:#555;font-weight:400;white-space:nowrap;"><span id="t132" class="s" style="transform-origin:right center;transform:scaleX(0.9336);">0.80</span></div>
<div style="position:absolute;right:506.5px;top:450.70px;font-size:11px;line-height:11px;color:#dfe0e4;font-weight:400;white-space:nowrap;"><span id="t133" class="s" style="transform-origin:right center;transform:scaleX(0.9336);text-decoration:underline;">0.00</span></div>
<div style="position:absolute;right:506.5px;top:483.50px;font-size:11px;line-height:11px;color:#555;font-weight:400;white-space:nowrap;"><span id="t134" class="s" style="transform-origin:right center;transform:scaleX(0.9336);">0.80</span></div>
<div style="position:absolute;right:506.5px;top:499.70px;font-size:11px;line-height:11px;color:#dfe0e4;font-weight:400;white-space:nowrap;"><span id="t135" class="s" style="transform-origin:right center;transform:scaleX(0.9336);text-decoration:underline;">0.00</span></div>
<div style="position:absolute;right:506.5px;top:533.50px;font-size:11px;line-height:11px;color:#dfe0e4;font-weight:400;white-space:nowrap;"><span id="t136" class="s" style="transform-origin:right center;transform:scaleX(0.9336);">0.00</span></div>
<div style="position:absolute;right:506.5px;top:549.70px;font-size:11px;line-height:11px;color:#dfe0e4;font-weight:400;white-space:nowrap;"><span id="t137" class="s" style="transform-origin:right center;transform:scaleX(0.9336);text-decoration:underline;">0.00</span></div>
<div style="position:absolute;right:431.5px;top:434.00px;font-size:11px;line-height:11px;color:#555;font-weight:400;white-space:nowrap;"><span id="t138" class="s" style="transform-origin:right center;transform:scaleX(0.9336);">0.80</span></div>
<div style="position:absolute;right:431.5px;top:450.70px;font-size:11px;line-height:11px;color:#dfe0e4;font-weight:400;white-space:nowrap;"><span id="t139" class="s" style="transform-origin:right center;transform:scaleX(0.9336);text-decoration:underline;">0.00</span></div>
<div style="position:absolute;right:431.5px;top:483.50px;font-size:11px;line-height:11px;color:#555;font-weight:400;white-space:nowrap;"><span id="t140" class="s" style="transform-origin:right center;transform:scaleX(0.9336);">0.80</span></div>
<div style="position:absolute;right:431.5px;top:499.70px;font-size:11px;line-height:11px;color:#dfe0e4;font-weight:400;white-space:nowrap;"><span id="t141" class="s" style="transform-origin:right center;transform:scaleX(0.9336);text-decoration:underline;">0.00</span></div>
<div style="position:absolute;right:431.5px;top:533.50px;font-size:11px;line-height:11px;color:#dfe0e4;font-weight:400;white-space:nowrap;"><span id="t142" class="s" style="transform-origin:right center;transform:scaleX(0.9336);">0.00</span></div>
<div style="position:absolute;right:431.5px;top:549.70px;font-size:11px;line-height:11px;color:#dfe0e4;font-weight:400;white-space:nowrap;"><span id="t143" class="s" style="transform-origin:right center;transform:scaleX(0.9336);text-decoration:underline;">0.00</span></div>
<div style="position:absolute;right:356.5px;top:434.00px;font-size:11px;line-height:11px;color:#555;font-weight:400;white-space:nowrap;"><span id="t144" class="s" style="transform-origin:right center;transform:scaleX(0.9336);">0.80</span></div>
<div style="position:absolute;right:356.5px;top:450.70px;font-size:11px;line-height:11px;color:#dfe0e4;font-weight:400;white-space:nowrap;"><span id="t145" class="s" style="transform-origin:right center;transform:scaleX(0.9336);text-decoration:underline;">0.00</span></div>
<div style="position:absolute;right:356.5px;top:483.50px;font-size:11px;line-height:11px;color:#555;font-weight:400;white-space:nowrap;"><span id="t146" class="s" style="transform-origin:right center;transform:scaleX(0.9336);">0.80</span></div>
<div style="position:absolute;right:356.5px;top:499.70px;font-size:11px;line-height:11px;color:#dfe0e4;font-weight:400;white-space:nowrap;"><span id="t147" class="s" style="transform-origin:right center;transform:scaleX(0.9336);text-decoration:underline;">0.00</span></div>
<div style="position:absolute;right:356.5px;top:533.50px;font-size:11px;line-height:11px;color:#dfe0e4;font-weight:400;white-space:nowrap;"><span id="t148" class="s" style="transform-origin:right center;transform:scaleX(0.9336);">0.00</span></div>
<div style="position:absolute;right:356.5px;top:549.70px;font-size:11px;line-height:11px;color:#dfe0e4;font-weight:400;white-space:nowrap;"><span id="t149" class="s" style="transform-origin:right center;transform:scaleX(0.9336);text-decoration:underline;">0.00</span></div>
<div style="position:absolute;right:281.5px;top:434.00px;font-size:11px;line-height:11px;color:#555;font-weight:400;white-space:nowrap;"><span id="t150" class="s" style="transform-origin:right center;transform:scaleX(0.9336);">0.80</span></div>
<div style="position:absolute;right:281.5px;top:450.70px;font-size:11px;line-height:11px;color:#dfe0e4;font-weight:400;white-space:nowrap;"><span id="t151" class="s" style="transform-origin:right center;transform:scaleX(0.9336);text-decoration:underline;">0.00</span></div>
<div style="position:absolute;right:281.5px;top:483.50px;font-size:11px;line-height:11px;color:#555;font-weight:400;white-space:nowrap;"><span id="t152" class="s" style="transform-origin:right center;transform:scaleX(0.9336);">0.80</span></div>
<div style="position:absolute;right:281.5px;top:499.70px;font-size:11px;line-height:11px;color:#dfe0e4;font-weight:400;white-space:nowrap;"><span id="t153" class="s" style="transform-origin:right center;transform:scaleX(0.9336);text-decoration:underline;">0.00</span></div>
<div style="position:absolute;right:281.5px;top:533.50px;font-size:11px;line-height:11px;color:#dfe0e4;font-weight:400;white-space:nowrap;"><span id="t154" class="s" style="transform-origin:right center;transform:scaleX(0.9336);">0.00</span></div>
<div style="position:absolute;right:281.5px;top:549.70px;font-size:11px;line-height:11px;color:#dfe0e4;font-weight:400;white-space:nowrap;"><span id="t155" class="s" style="transform-origin:right center;transform:scaleX(0.9336);text-decoration:underline;">0.00</span></div>
<svg style="position:absolute;left:21px;top:595px" width="16" height="18" viewBox="0 0 16 18"><path d="M9.6 1.8 H4.7 Q2.7 1.8 2.7 3.8 V14.1 Q2.7 16.1 4.7 16.1 H11.8 Q13.8 16.1 13.8 14.1 V6 Z" fill="none" stroke="#444" stroke-width="1.6" stroke-linejoin="round"/><path d="M9.2 1.4 L14.2 6.4 H9.2 Z" fill="#444"/></svg>
<div style="position:absolute;left:45.4px;top:596.20px;font-size:13px;line-height:13px;color:#444;font-weight:400;white-space:nowrap;"><span id="t156" class="s" style="transform-origin:left center;transform:scaleX(0.7385);">アサインプロジェクト</span></div>
<div style="position:absolute;left:20px;top:630.4px;width:666px;height:32.60000000000002px;border:1px solid #dcdde4;border-radius:7px;box-sizing:border-box;"></div>
<svg style="position:absolute;left:34px;top:639px" width="16" height="16" viewBox="0 0 16 16"><circle cx="6.4" cy="5.2" r="4.3" fill="none" stroke="#333" stroke-width="1.7"/><path d="M9.4 8.3 L14.8 13.6" stroke="#333" stroke-width="1.9"/></svg>
<div style="position:absolute;left:60.4px;top:640.00px;font-size:13px;line-height:13px;color:#888;font-weight:400;white-space:nowrap;"><span id="t157" class="s" style="transform-origin:left center;transform:scaleX(0.7734);">プロジェクト名 / プロジェクトコード / クライアント名</span></div>
<div style="position:absolute;left:20px;top:679px;width:1497px;height:221px;border:1px solid #dcdde4;box-sizing:border-box;"></div>
<div style="position:absolute;left:21px;top:680px;width:1495px;height:33px;background:#f5f5fa;"></div>
<div style="position:absolute;left:20px;top:713px;width:1497px;height:1px;background:#d9dce2;"></div>
<div style="position:absolute;left:20px;top:750px;width:1497px;height:1px;background:#e2e4e9;"></div>
<div style="position:absolute;left:20px;top:788px;width:1497px;height:1px;background:#e2e4e9;"></div>
<div style="position:absolute;left:20px;top:825px;width:1497px;height:1px;background:#e2e4e9;"></div>
<div style="position:absolute;left:34.5px;top:690.00px;font-size:13px;line-height:13px;color:#444;font-weight:400;white-space:nowrap;"><span id="t158" class="s" style="transform-origin:left center;transform:scaleX(0.7473);">プロジェクト名</span></div>
<div style="position:absolute;left:332.5px;top:690.00px;font-size:13px;line-height:13px;color:#444;font-weight:400;white-space:nowrap;"><span id="t159" class="s" style="transform-origin:left center;transform:scaleX(0.6923);">プロジェクトコード</span></div>
<div style="position:absolute;left:582.5px;top:690.00px;font-size:13px;line-height:13px;color:#444;font-weight:400;white-space:nowrap;"><span id="t160" class="s" style="transform-origin:left center;transform:scaleX(0.9615);">期間</span></div>
<div style="position:absolute;left:881.5px;top:690.00px;font-size:13px;line-height:13px;color:#444;font-weight:400;white-space:nowrap;"><span id="t161" class="s" style="transform-origin:left center;transform:scaleX(0.7436);">クライアント</span></div>
<div style="position:absolute;left:1131.5px;top:690.00px;font-size:13px;line-height:13px;color:#444;font-weight:400;white-space:nowrap;"><span id="t162" class="s" style="transform-origin:left center;transform:scaleX(0.9615);">操作</span></div>
<div style="position:absolute;left:34.5px;top:725.70px;font-size:13px;line-height:13px;color:#444;font-weight:400;white-space:nowrap;"><span id="t163" class="s" style="transform-origin:left center;transform:scaleX(0.7692);">ショッピングモールアプリ開発</span></div>
<div style="position:absolute;left:332.5px;top:725.70px;font-size:13px;line-height:13px;color:#505050;font-weight:400;white-space:nowrap;"><span id="t164" class="s" style="transform-origin:left center;transform:scaleX(0.9521);">PJ-0018-01</span></div>
<div style="position:absolute;left:582.5px;top:725.70px;font-size:13px;line-height:13px;color:#505050;font-weight:400;white-space:nowrap;"><span id="t165" class="s" style="transform-origin:left center;transform:scaleX(1.0080);">2025-01-01 ~ 2025-09-30</span></div>
<div style="position:absolute;left:881.5px;top:725.70px;font-size:13px;line-height:13px;color:#444;font-weight:400;white-space:nowrap;"><span id="t166" class="s" style="transform-origin:left center;transform:scaleX(0.8750);">株式会社アルファ</span></div>
<svg style="position:absolute;left:1132px;top:724.2px" width="18" height="16" viewBox="0 0 18 16"><circle cx="2.7" cy="3" r="1.5" fill="#444"/><circle cx="2.7" cy="7.5" r="1.5" fill="#444"/><circle cx="2.7" cy="12" r="1.5" fill="#444"/><path d="M6 3 H15 M6 7.5 H15 M6 12 H15" stroke="#444" stroke-width="1.9"/></svg>
<div style="position:absolute;left:34.5px;top:762.80px;font-size:13px;line-height:13px;color:#444;font-weight:400;white-space:nowrap;"><span id="t167" class="s" style="transform-origin:left center;transform:scaleX(0.8846);">顧客基盤スマホアプリ構築</span></div>
<div style="position:absolute;left:332.5px;top:762.80px;font-size:13px;line-height:13px;color:#505050;font-weight:400;white-space:nowrap;"><span id="t168" class="s" style="transform-origin:left center;transform:scaleX(0.9521);">PJ-0004-02</span></div>
<div style="position:absolute;left:582.5px;top:762.80px;font-size:13px;line-height:13px;color:#505050;font-weight:400;white-space:nowrap;"><span id="t169" class="s" style="transform-origin:left center;transform:scaleX(1.0080);">2024-07-01 ~ 2025-01-31</span></div>
<div style="position:absolute;left:881.5px;top:762.80px;font-size:13px;line-height:13px;color:#444;font-weight:400;white-space:nowrap;"><span id="t170" class="s" style="transform-origin:left center;transform:scaleX(0.8392);">株式会社ライフスタイル</span></div>
<svg style="position:absolute;left:1132px;top:761.3px" width="18" height="16" viewBox="0 0 18 16"><circle cx="2.7" cy="3" r="1.5" fill="#444"/><circle cx="2.7" cy="7.5" r="1.5" fill="#444"/><circle cx="2.7" cy="12" r="1.5" fill="#444"/><path d="M6 3 H15 M6 7.5 H15 M6 12 H15" stroke="#444" stroke-width="1.9"/></svg>
<div style="position:absolute;left:34.5px;top:800.00px;font-size:13px;line-height:13px;color:#444;font-weight:400;white-space:nowrap;"><span id="t171" class="s" style="transform-origin:left center;transform:scaleX(0.9077);">顧客管理システム導入</span></div>
<div style="position:absolute;left:332.5px;top:800.00px;font-size:13px;line-height:13px;color:#505050;font-weight:400;white-space:nowrap;"><span id="t172" class="s" style="transform-origin:left center;transform:scaleX(0.9521);">PJ-0003-01</span></div>
<div style="position:absolute;left:582.5px;top:800.00px;font-size:13px;line-height:13px;color:#505050;font-weight:400;white-space:nowrap;"><span id="t173" class="s" style="transform-origin:left center;transform:scaleX(1.0080);">2024-04-01 ~ 2024-09-30</span></div>
<div style="position:absolute;left:881.5px;top:800.00px;font-size:13px;line-height:13px;color:#444;font-weight:400;white-space:nowrap;"><span id="t174" class="s" style="transform-origin:left center;transform:scaleX(0.8632);">株式会社マイスター</span></div>
<svg style="position:absolute;left:1132px;top:798.5px" width="18" height="16" viewBox="0 0 18 16"><circle cx="2.7" cy="3" r="1.5" fill="#444"/><circle cx="2.7" cy="7.5" r="1.5" fill="#444"/><circle cx="2.7" cy="12" r="1.5" fill="#444"/><path d="M6 3 H15 M6 7.5 H15 M6 12 H15" stroke="#444" stroke-width="1.9"/></svg>
<div style="position:absolute;left:34.5px;top:837.80px;font-size:13px;line-height:13px;color:#444;font-weight:400;white-space:nowrap;"><span id="t175" class="s" style="transform-origin:left center;transform:scaleX(0.8706);">顧客基盤スマホアプリ構築に向けた戦略コンサル</span></div>
<div style="position:absolute;left:332.5px;top:837.80px;font-size:13px;line-height:13px;color:#505050;font-weight:400;white-space:nowrap;"><span id="t176" class="s" style="transform-origin:left center;transform:scaleX(0.9521);">PJ-0004-01</span></div>
<div style="position:absolute;left:582.5px;top:837.80px;font-size:13px;line-height:13px;color:#505050;font-weight:400;white-space:nowrap;"><span id="t177" class="s" style="transform-origin:left center;transform:scaleX(1.0080);">2024-05-01 ~ 2024-06-30</span></div>
<div style="position:absolute;left:881.5px;top:837.80px;font-size:13px;line-height:13px;color:#444;font-weight:400;white-space:nowrap;"><span id="t178" class="s" style="transform-origin:left center;transform:scaleX(0.8392);">株式会社ライフスタイル</span></div>
<svg style="position:absolute;left:1132px;top:836.3px" width="18" height="16" viewBox="0 0 18 16"><circle cx="2.7" cy="3" r="1.5" fill="#444"/><circle cx="2.7" cy="7.5" r="1.5" fill="#444"/><circle cx="2.7" cy="12" r="1.5" fill="#444"/><path d="M6 3 H15 M6 7.5 H15 M6 12 H15" stroke="#444" stroke-width="1.9"/></svg>
</body></html>
